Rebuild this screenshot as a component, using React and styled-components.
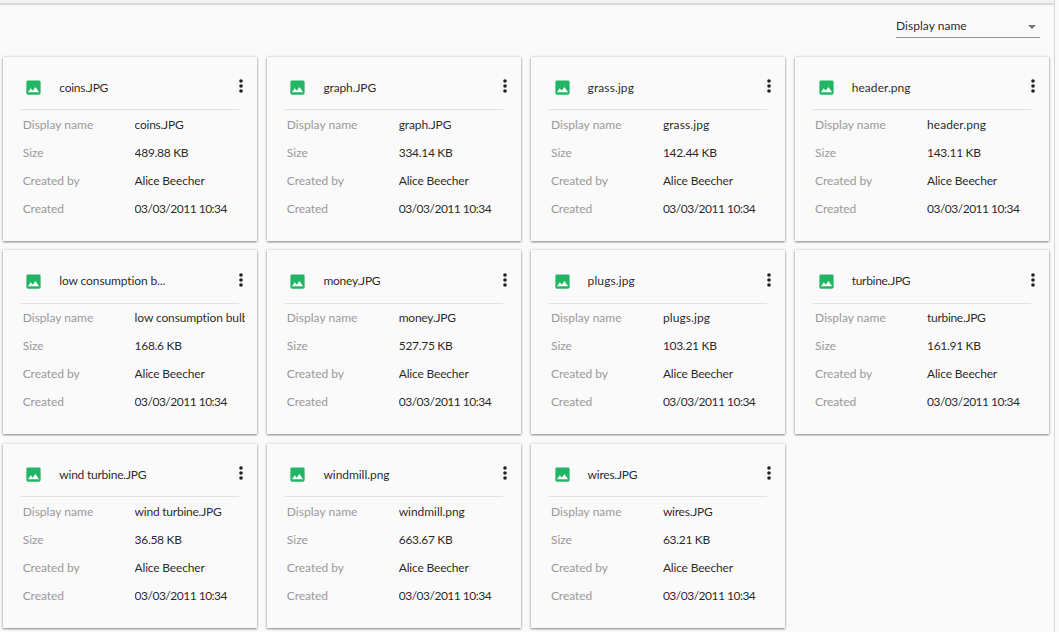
import React from 'react';
import styled, { createGlobalStyle } from 'styled-components';

const GlobalStyle = createGlobalStyle`
  * { box-sizing: border-box; }
  html, body { margin: 0; padding: 0; background: #fafafa; }
  body {
    overflow: hidden;
    font-family: Lato, "Liberation Sans", sans-serif;
    font-size: 12px;
    color: rgba(0, 0, 0, 0.87);
  }
`;

const Page = styled.div`
  display: flex;
  width: 1059px;
  height: 632px;
  overflow: hidden;
`;

const Content = styled.main`
  width: 1055px;
  height: 632px;
  border-right: 1px solid #d8d8d8;
  overflow: hidden;
`;

const TopStrip = styled.div`
  height: 5px;
  background: #f2f2f2;
  border-bottom: 2px solid #dadada;
`;

const Toolbar = styled.div`
  display: flex;
  justify-content: flex-end;
  height: 51.5px;
  padding: 11px 14px 0 0;
`;

const SortSelect = styled.button`
  display: flex;
  align-items: center;
  justify-content: space-between;
  width: 144px;
  height: 22px;
  padding: 0 4px 0 0;
  border: 0;
  border-bottom: 1px solid #949494;
  background: none;
  color: inherit;
  font: inherit;
`;

const Arrow = styled.svg`
  width: 8px;
  height: 4px;
  margin-top: 1px;
  fill: #757575;
`;

const Grid = styled.div`
  display: grid;
  grid-template-columns: repeat(4, 254px);
  grid-auto-rows: 184px;
  gap: 9.5px 10.15px;
  padding-left: 3px;
`;

const Card = styled.article`
  padding: 0 12px 0 18px;
  background: #fafafa;
  box-shadow: 0 1px 2px rgba(0, 0, 0, 0.42), 0 0 3px rgba(0, 0, 0, 0.16);
`;

const CardHeader = styled.header`
  display: flex;
  align-items: flex-start;
  width: 218px;
  height: 53.6px;
  border-bottom: 1px solid #e0e0e0;
`;

const FileIcon = styled.svg`
  flex: none;
  width: 19px;
  height: 19px;
  margin: 21.5px 0 0 3.3px;
  fill: #23b566;
`;

const Title = styled.h2`
  flex: none;
  width: 170px;
  margin: 22px 0 0 16px;
  font-size: 12px;
  font-weight: 400;
  line-height: 18px;
  letter-spacing: ${(p) => p.$track}px;
  white-space: nowrap;
`;

const MenuIcon = styled.svg`
  flex: none;
  width: 4px;
  height: 14px;
  margin: 22.8px 0 0 9.7px;
  fill: #212121;
`;

const Details = styled.dl`
  margin: 0;
  padding: 0.7px 0 0 1.7px;
`;

const DetailRow = styled.div`
  display: flex;
  height: 28px;
  line-height: 28px;
  white-space: nowrap;
`;

const Label = styled.dt`
  width: 112px;
  color: #999;
  letter-spacing: ${(p) => p.$track}px;
`;

const Value = styled.dd`
  width: 110.5px;
  margin: 0;
  overflow: hidden;
  letter-spacing: ${(p) => p.$track}px;
`;

const SelectText = styled.span`
  margin-top: -2px;
  letter-spacing: ${(p) => p.$track}px;
`;

const tracking = {
  'Display name': 0.03,
  Size: 0,
  'Created by': -0.05,
  Created: -0.08,
  'Alice Beecher': -0.18,
  '03/03/2011 10:34': -0.5,
  'coins.JPG': -0.25,
  'graph.JPG': -0.13,
  'grass.jpg': 0.1,
  'header.png': 0.05,
  'low consumption b...': -0.12,
  'low consumption bulb.png': -0.12,
  'money.JPG': -0.25,
  'plugs.jpg': 0.1,
  'turbine.JPG': -0.3,
  'wind turbine.JPG': -0.23,
  'windmill.png': -0.05,
  'wires.JPG': -0.24,
};
const track = (text) => tracking[text] ?? -0.3;

const files = [
  ['coins.JPG', '489.88 KB'],
  ['graph.JPG', '334.14 KB'],
  ['grass.jpg', '142.44 KB'],
  ['header.png', '143.11 KB'],
  ['low consumption bulb.png', '168.6 KB', 'low consumption b...'],
  ['money.JPG', '527.75 KB'],
  ['plugs.jpg', '103.21 KB'],
  ['turbine.JPG', '161.91 KB'],
  ['wind turbine.JPG', '36.58 KB'],
  ['windmill.png', '663.67 KB'],
  ['wires.JPG', '63.21 KB'],
];

function Detail({ label, value }) {
  return (
    <DetailRow>
      <Label $track={track(label)}>{label}</Label>
      <Value $track={track(value)}>{value}</Value>
    </DetailRow>
  );
}

function FileCard({ name, size, title }) {
  return (
    <Card>
      <CardHeader>
        <FileIcon viewBox="0 0 24 24">
          <path d="M21 19V5c0-1.100-.9-2-2-2H5c-1.100 0-2 .9-2 2v14c0 1.100.9 2 2 2h14c1.100 0 2-.9 2-2z" />
          <path fill="#fff" d="M5 18l3.600-5 2.500 3 3.300-4.500L19 18z" />
        </FileIcon>
        <Title $track={track(title)}>{title}</Title>
        <MenuIcon viewBox="0 0 4 14">
          <circle cx="2" cy="2" r="1.800" />
          <circle cx="2" cy="7" r="1.800" />
          <circle cx="2" cy="12" r="1.800" />
        </MenuIcon>
      </CardHeader>
      <Details>
        <Detail label="Display name" value={name} />
        <Detail label="Size" value={size} />
        <Detail label="Created by" value="Alice Beecher" />
        <Detail label="Created" value="03/03/2011 10:34" />
      </Details>
    </Card>
  );
}

export default function App() {
  return (
    <>
      <GlobalStyle />
      <Page>
        <Content>
          <TopStrip />
          <Toolbar>
            <SortSelect>
              <SelectText $track={track('Display name')}>Display name</SelectText>
              <Arrow viewBox="0 0 8 4"><path d="M0 0h8L4 4z" /></Arrow>
            </SortSelect>
          </Toolbar>
          <Grid>
            {files.map(([name, size, title = name]) => (
              <FileCard key={name} name={name} size={size} title={title} />
            ))}
          </Grid>
        </Content>
      </Page>
    </>
  );
}
